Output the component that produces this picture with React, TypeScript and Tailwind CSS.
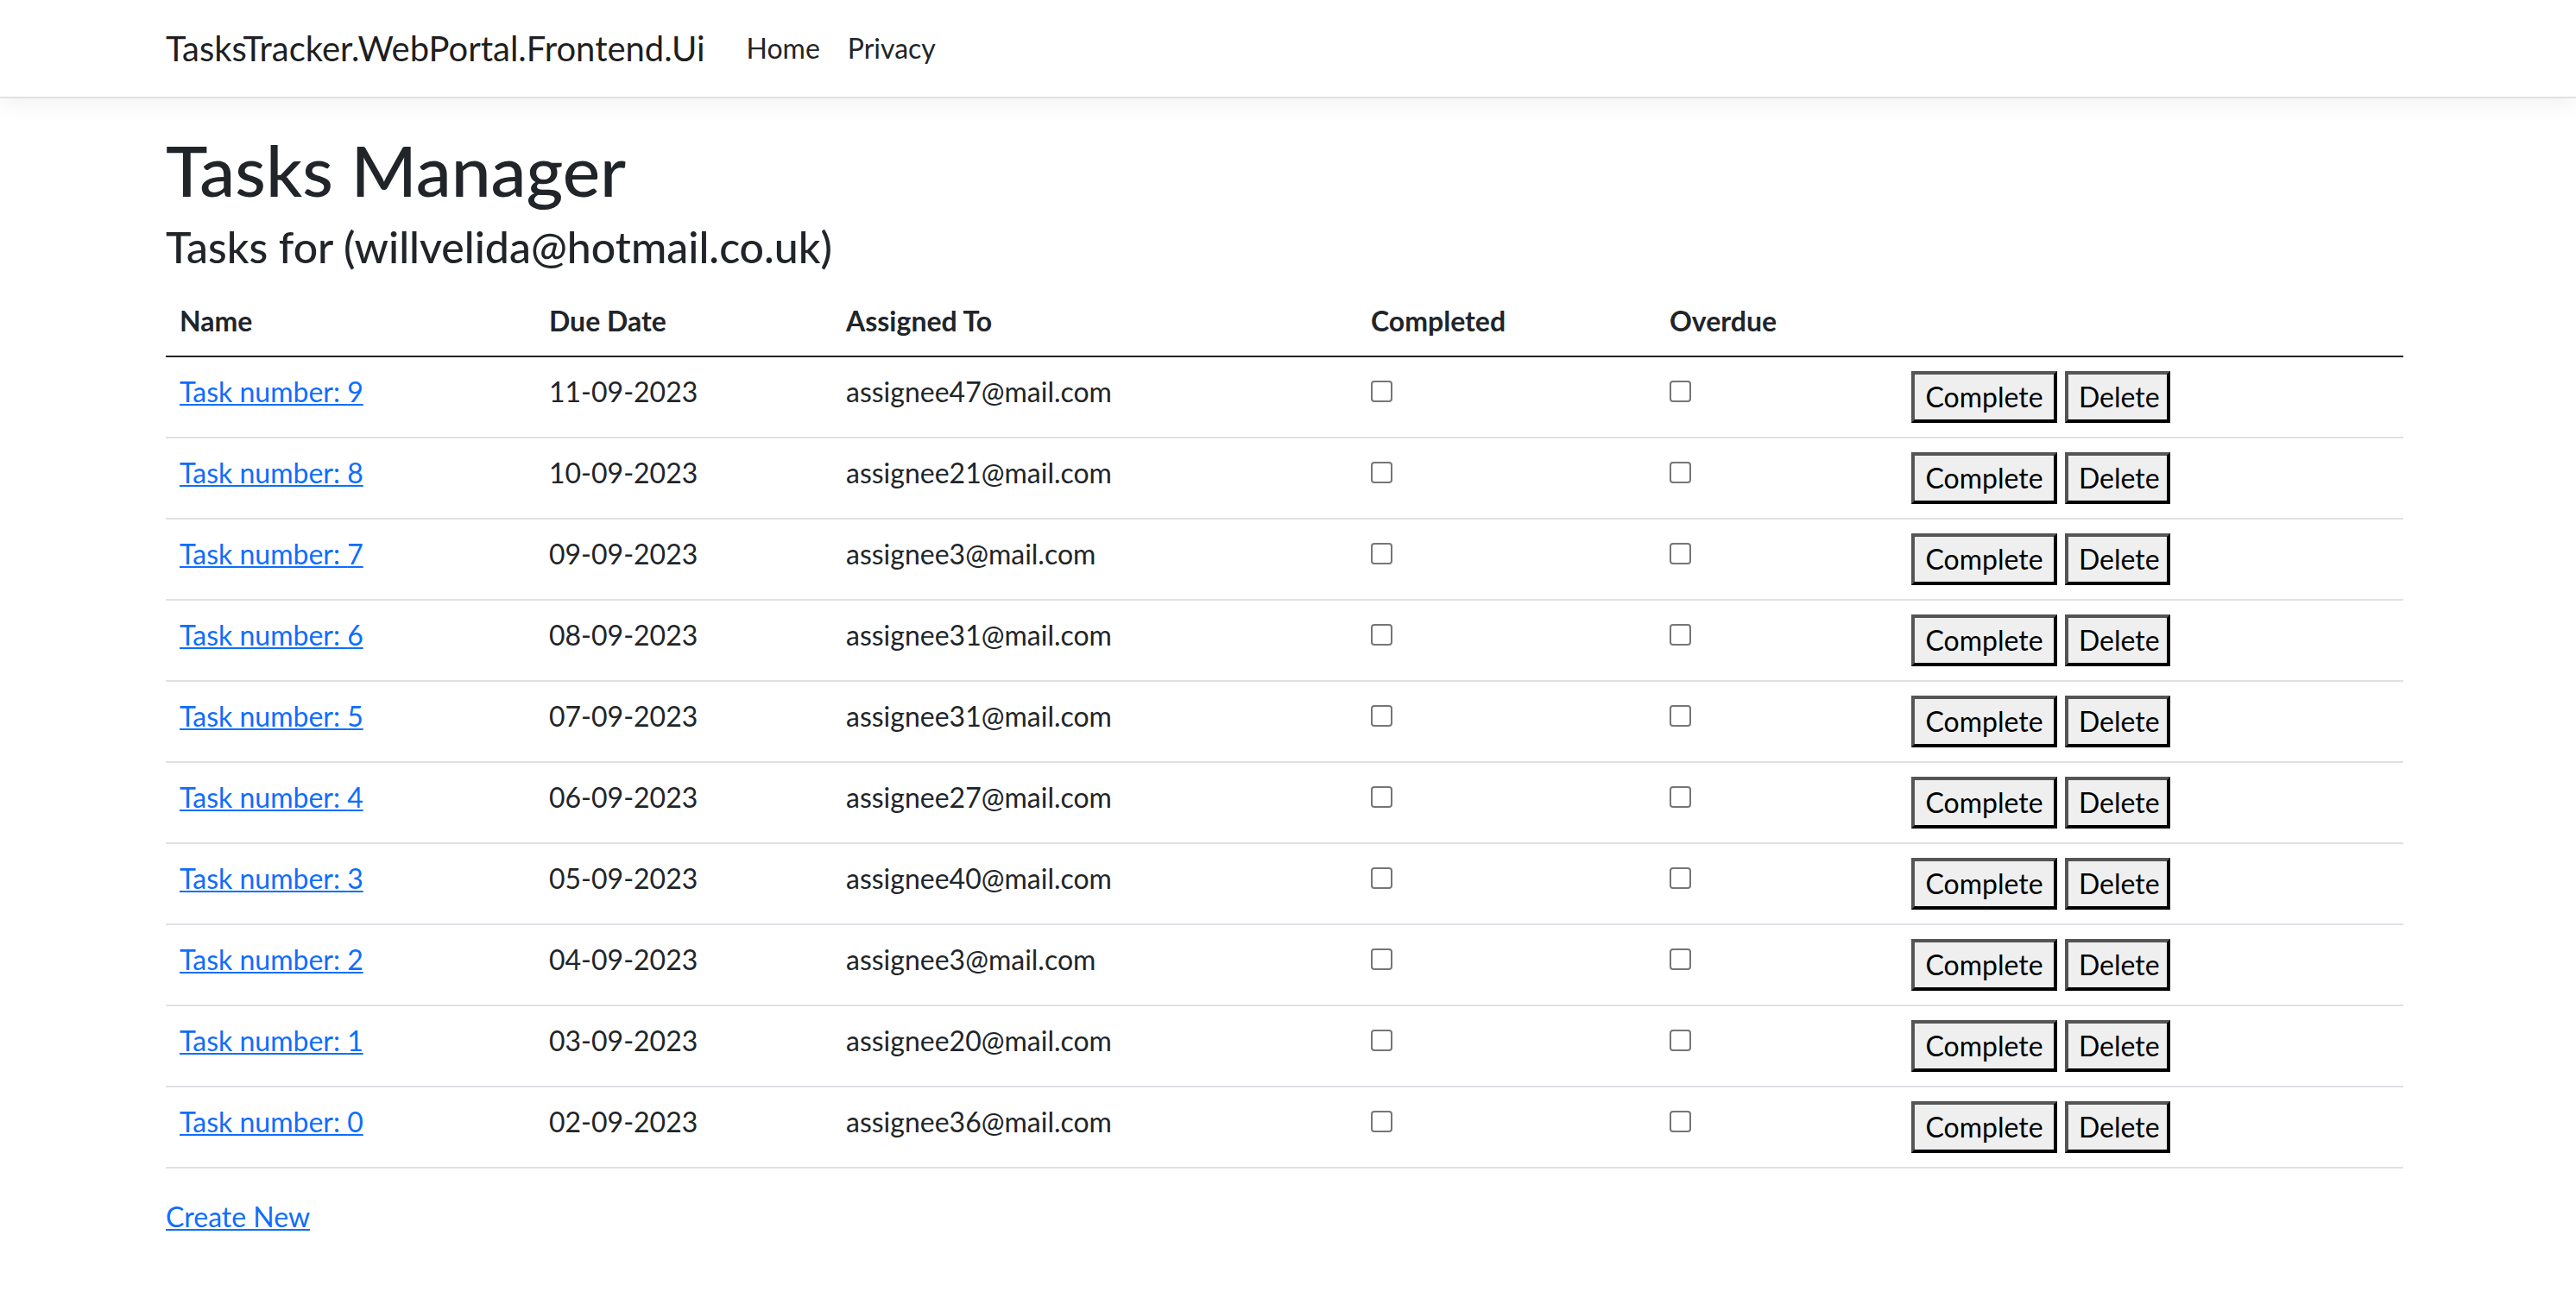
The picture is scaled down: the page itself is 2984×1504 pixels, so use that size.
const TASKS = [
  { id: 9, due: "11-09-2023", assignee: "assignee47@mail.com" },
  { id: 8, due: "10-09-2023", assignee: "assignee21@mail.com" },
  { id: 7, due: "09-09-2023", assignee: "assignee3@mail.com" },
  { id: 6, due: "08-09-2023", assignee: "assignee31@mail.com" },
  { id: 5, due: "07-09-2023", assignee: "assignee31@mail.com" },
  { id: 4, due: "06-09-2023", assignee: "assignee27@mail.com" },
  { id: 3, due: "05-09-2023", assignee: "assignee40@mail.com" },
  { id: 2, due: "04-09-2023", assignee: "assignee3@mail.com" },
  { id: 1, due: "03-09-2023", assignee: "assignee20@mail.com" },
  { id: 0, due: "02-09-2023", assignee: "assignee36@mail.com" },
];

function Checkbox() {
  return (
    <input
      type="checkbox"
      className="mt-[11px] block h-[25px] w-[25px] appearance-none rounded-[4px] border-2 border-[#767676] bg-white"
    />
  );
}

function NativeButton({ label, width }: { label: string; width: string }) {
  return (
    <button
      className={`${width} h-[60px] border-4 border-t-[#555555] border-l-[#555555] border-r-black border-b-black bg-[#efefef] px-3 text-center text-[32px] leading-[48px] text-black`}
    >
      {label}
    </button>
  );
}

export default function App() {
  return (
    <div className="min-h-screen bg-white font-['Lato',sans-serif] text-[32px] leading-[48px] text-[#212529]">
      <header className="mb-8 border-b-2 border-[#dee2e6] bg-white shadow-[0_8px_24px_rgba(0,0,0,0.05)]">
        <nav className="ml-[192px] flex w-[2592px] items-center py-4">
          <a href="#" className="mr-8 py-[10px] text-[40px] leading-[60px] text-black/90">
            TasksTracker.WebPortal.Frontend.Ui
          </a>
          <ul className="flex">
            <li>
              <a href="#" className="block px-4 py-2 text-[#212529]">Home</a>
            </li>
            <li>
              <a href="#" className="block px-4 py-2 text-[#212529]">Privacy</a>
            </li>
          </ul>
        </nav>
      </header>

      <main className="ml-[192px] w-[2592px] pb-8">
        <h1 className="mb-[14px] pt-[2px] text-[82px] font-medium leading-[96px]">Tasks Manager</h1>
        <h4 className="mb-4 text-[50px] font-medium leading-[57.6px]">Tasks for (willvelida@hotmail.co.uk)</h4>

        <table className="mb-8 w-full table-fixed border-collapse text-left">
          <colgroup>
            <col className="w-[428px]" />
            <col className="w-[344px]" />
            <col className="w-[608px]" />
            <col className="w-[346px]" />
            <col className="w-[280px]" />
            <col className="w-[586px]" />
          </colgroup>
          <thead>
            <tr className="border-b-2 border-[#212529]">
              <th className="p-4 align-bottom font-bold">Name</th>
              <th className="p-4 align-bottom font-bold">Due Date</th>
              <th className="p-4 align-bottom font-bold">Assigned To</th>
              <th className="p-4 align-bottom font-bold">Completed</th>
              <th className="p-4 align-bottom font-bold">Overdue</th>
              <th className="p-4 align-bottom" />
            </tr>
          </thead>
          <tbody>
            {TASKS.map((t) => (
              <tr key={t.id} className="border-b-2 border-[#dee2e6]">
                <td className="p-4 align-top">
                  <a href="#" className="text-[#0d6efd] underline decoration-2 underline-offset-[2px]">
                    Task number: {t.id}
                  </a>
                </td>
                <td className="p-4 align-top">{t.due}</td>
                <td className="p-4 align-top">{t.assignee}</td>
                <td className="p-4 align-top">
                  <Checkbox />
                </td>
                <td className="p-4 align-top">
                  <Checkbox />
                </td>
                <td className="p-4 align-top">
                  <div className="flex gap-[9px]">
                    <NativeButton label="Complete" width="w-[169px]" />
                    <NativeButton label="Delete" width="w-[122px]" />
                  </div>
                </td>
              </tr>
            ))}
          </tbody>
        </table>

        <p>
          <a href="#" className="text-[#0d6efd] underline decoration-2 underline-offset-[2px]">
            Create New
          </a>
        </p>
      </main>
    </div>
  );
}
